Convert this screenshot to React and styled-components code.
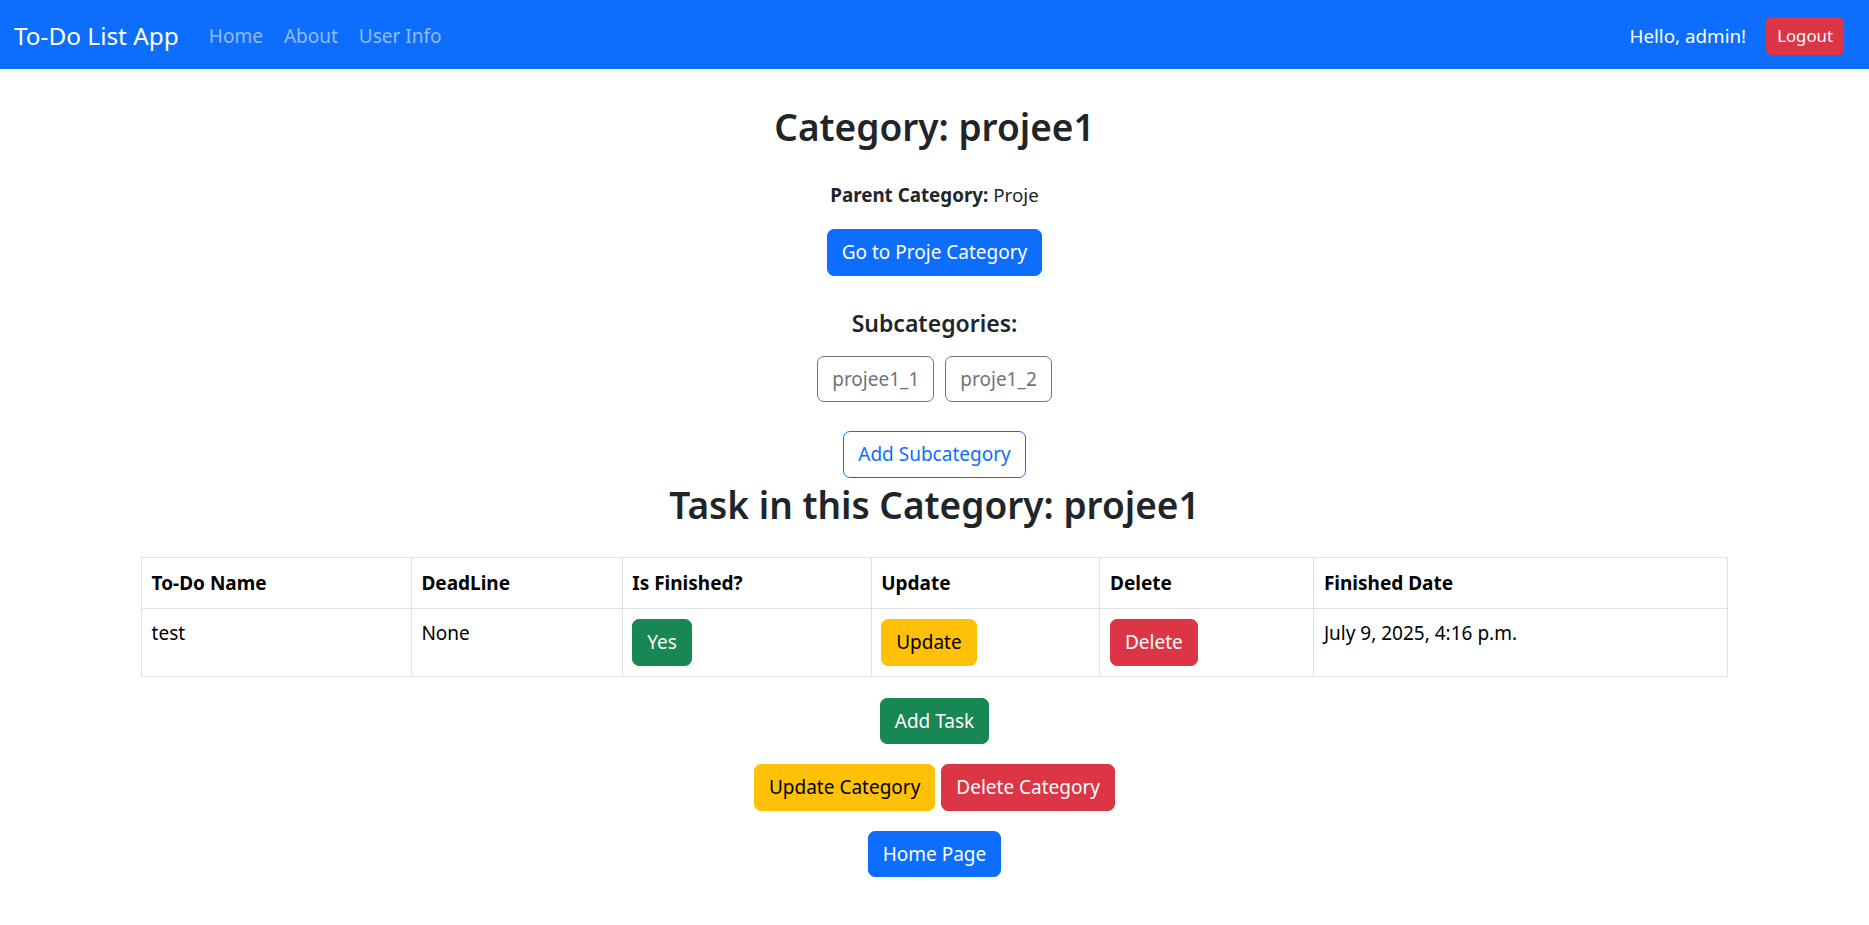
import styled, { createGlobalStyle } from "styled-components";

const GlobalStyle = createGlobalStyle`
body{
margin:0;
font-family:"Noto Sans","Liberation Sans",sans-serif;
color:#212529;
background:#fff;
font-size:19.2px;
line-height:1.5;
}
`;

const colors = {
  primary: "#0d6efd",
  danger: "#dc3545",
  success: "#198754",
  warning: "#ffc107",
  secondary: "#6c757d",
};

const Navbar = styled.nav`
display:flex;
align-items:center;
height:69px;
padding:3px 25px 0 14px;
background:${colors.primary};
box-sizing:border-box;
`;
const Brand = styled.div`
font-size:24.4px;
color:white;
margin-right:30px;
`;
const NavLinks = styled.div`
display:flex;
gap:21px;
flex:1;
`;
const NavLink = styled.span`
color:rgba(255,255,255,0.55);
font-size:19px;
`;
const Hello = styled.span`
color:white;
font-size:18.8px;
margin-right:20px;
`;
const Main = styled.main`
display:flex;
flex-direction:column;
align-items:center;
padding-top:35px;
padding-bottom:40px;
`;
const Heading = styled.h2`
font-size:37px;
font-weight:600;
line-height:1.25;
margin:0 0 ${(p) => p.$mb || 0}px;
`;
const SubHeading = styled.h5`
font-size:23px;
font-weight:600;
line-height:1.25;
margin:0 0 18px;
`;
const Para = styled.p`
margin:0 0 20px;
font-size:18.8px;
`;
const Btn = styled.button`
font-family:inherit;
font-size:${(p) => (p.$small ? "16.8px" : "19px")};
line-height:1.5;
padding:${(p) => (p.$small ? "5px 10px" : "8px 14px")};
border-radius:${(p) => (p.$small ? "5px" : "7px")};
border:1px solid ${(p) => colors[p.$variant]};
background:${(p) => (p.$outline ? "transparent" : colors[p.$variant])};
color:${(p) =>
    p.$outline ? colors[p.$variant] : p.$variant === "warning" ? "#000" : "#fff"};
cursor:pointer;
`;
const Row = styled.div`
display:flex;
justify-content:center;
gap:${(p) => p.$gap || 6}px;
margin-bottom:${(p) => p.$mb || 0}px;
`;
const Table = styled.table`
width:1587px;
border-collapse:collapse;
margin:29px 0 21px;
font-size:19px;
th,td{
border:1px solid #dee2e6;
padding:10px 9.6px;
text-align:left;
vertical-align:top;
color:#000;
}
th{
font-weight:700;
padding:11px 9.6px;
}
`;

const columns = [
  { label: "To-Do Name", width: 270 },
  { label: "DeadLine", width: 211 },
  { label: "Is Finished?", width: 249 },
  { label: "Update", width: 229 },
  { label: "Delete", width: 214 },
  { label: "Finished Date", width: 414 },
];

const App = () => {
  return (
    <>
      <GlobalStyle />
      <Navbar>
        <Brand>To-Do List App</Brand>
        <NavLinks>
          <NavLink>Home</NavLink>
          <NavLink>About</NavLink>
          <NavLink>User Info</NavLink>
        </NavLinks>
        <Hello>Hello, admin!</Hello>
        <Btn $variant="danger" $small>Logout</Btn>
      </Navbar>
      <Main>
        <Heading $mb={31}>Category: projee1</Heading>
        <Para>
          <b>Parent Category:</b> Proje
        </Para>
        <Row $mb={33}>
          <Btn $variant="primary">Go to Proje Category</Btn>
        </Row>
        <SubHeading>Subcategories:</SubHeading>
        <Row $gap={11} $mb={29}>
          <Btn $variant="secondary" $outline>projee1_1</Btn>
          <Btn $variant="secondary" $outline>proje1_2</Btn>
        </Row>
        <Row $mb={4}>
          <Btn $variant="primary" $outline>Add Subcategory</Btn>
        </Row>
        <Heading>Task in this Category: projee1</Heading>
        <Table>
          <colgroup>
            {columns.map((c) => (
              <col key={c.label} style={{ width: c.width }} />
            ))}
          </colgroup>
          <thead>
            <tr>
              {columns.map((c) => (
                <th key={c.label}>{c.label}</th>
              ))}
            </tr>
          </thead>
          <tbody>
            <tr>
              <td>test</td>
              <td>None</td>
              <td>
                <Btn $variant="success">Yes</Btn>
              </td>
              <td>
                <Btn $variant="warning">Update</Btn>
              </td>
              <td>
                <Btn $variant="danger">Delete</Btn>
              </td>
              <td>July 9, 2025, 4:16 p.m.</td>
            </tr>
          </tbody>
        </Table>
        <Row $mb={20}>
          <Btn $variant="success">Add Task</Btn>
        </Row>
        <Row $mb={20}>
          <Btn $variant="warning">Update Category</Btn>
          <Btn $variant="danger">Delete Category</Btn>
        </Row>
        <Row>
          <Btn $variant="primary">Home Page</Btn>
        </Row>
      </Main>
    </>
  );
};

export default App;
